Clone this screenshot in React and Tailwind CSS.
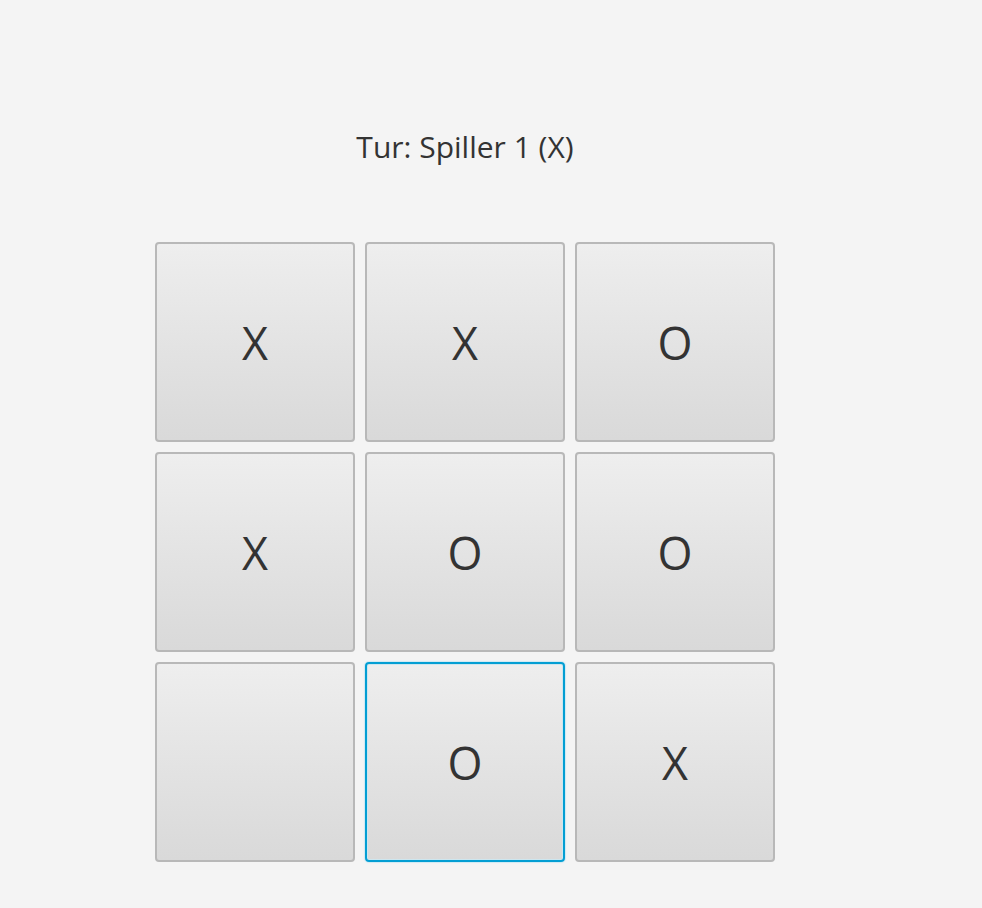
const cells = ['X', 'X', 'O', 'X', 'O', 'O', '', 'O', 'X']

export default function App() {
  return (
    <div className="min-h-[908px] w-full bg-[#f4f4f4] font-['Open_Sans',sans-serif] text-[#333333]">
      <div className="w-[930px] flex flex-col items-center">
        <div className="h-[242px] pt-[130px]">
          <h1 className="text-[30px] leading-[34px]">Tur: Spiller 1 (X)</h1>
        </div>
        <div className="grid grid-cols-[200px_200px_200px] gap-[10px] w-[620px]">
          {cells.map((c, i) => (
            <button
              key={i}
              className={`h-[200px] rounded-[4px] border-2 bg-gradient-to-b from-[#eeeeee] to-[#d9d9d9] flex items-center justify-center text-[45px] leading-none ${
                i === 7
                  ? 'border-[#039ed3] shadow-[0_0_1px_1px_#cfe9f3,inset_0_0_0_1px_#cde6ef]'
                  : 'border-[#b8b8b8]'
              }`}
            >
              {c}
            </button>
          ))}
        </div>
      </div>
    </div>
  )
}
